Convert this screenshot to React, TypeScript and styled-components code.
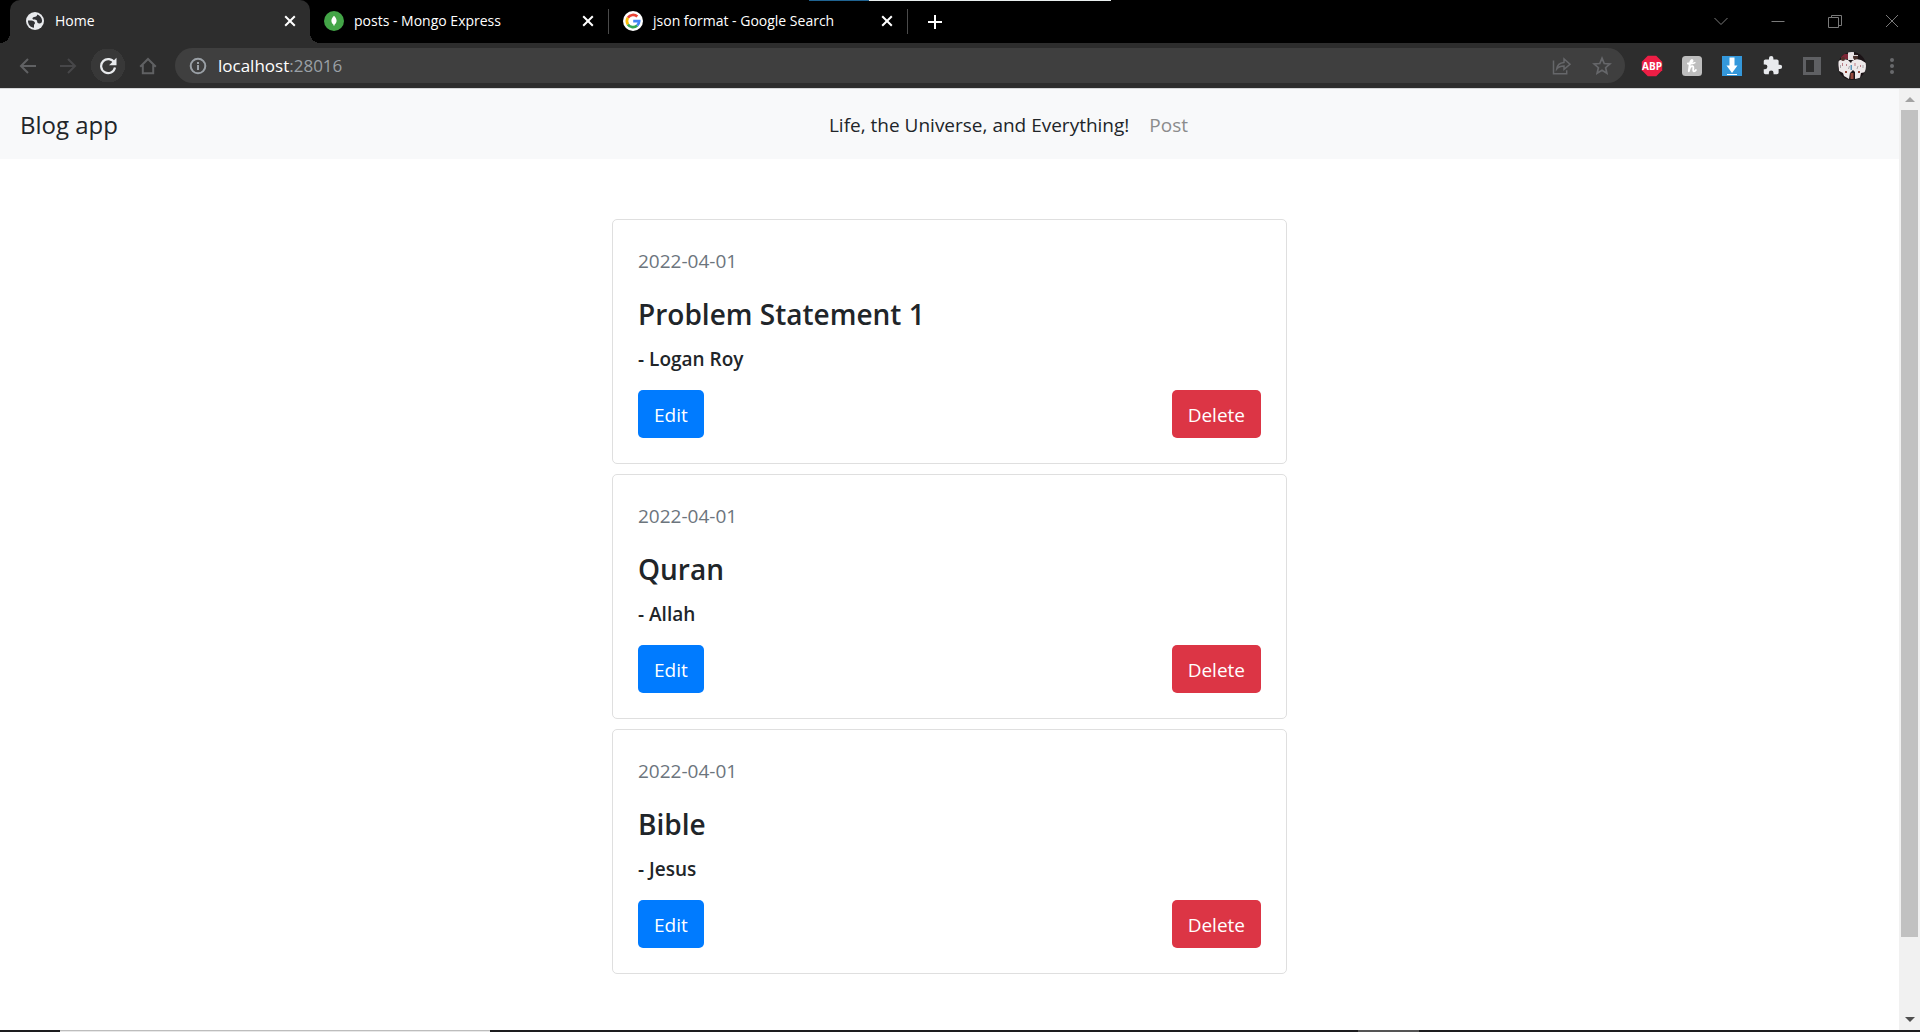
import React from "react";
import styled, { createGlobalStyle, css } from "styled-components";

const GlobalStyle = createGlobalStyle`
  *, *::before, *::after { box-sizing: border-box; }
  body {
    margin: 0;
    background: #fff;
    color: #212529;
    font-family: "Open Sans", "Noto Sans", sans-serif;
    font-size: 19px;
    line-height: 30px;
  }
  button, input { font: inherit; }
  svg { display: block; flex: none; }
`;

const BrowserWindow = styled.div`
  position: relative;
  display: flex;
  flex-direction: column;
  height: 100vh;
  overflow: hidden;
`;

const TopSliver = styled.div`
  position: absolute;
  top: 0;
  left: 42.15%;
  width: 15.7%;
  height: 1px;
  background: linear-gradient(to right, #1f6391 20%, #e9eeee 20%);
`;

const TabStrip = styled.div`
  display: flex;
  align-items: center;
  flex: none;
  height: 43px;
  padding-left: 10px;
  background: #000;
  color: #fff;
`;

const Tab = styled.div<{ $active?: boolean }>`
  position: relative;
  display: flex;
  align-items: center;
  gap: 10px;
  height: 100%;
  width: 298px;
  padding: 0 14px;
  padding-bottom: 1px;
  font-size: 14px;
  line-height: 20px;
  ${(p) =>
    p.$active &&
    css`
      width: 300px;
      padding: 0 14px 1px 15px;
      background: #2d2d2d;
      border-radius: 10px 10px 0 0;
      &::before,
      &::after {
        content: "";
        position: absolute;
        bottom: 0;
        width: 10px;
        height: 10px;
      }
      &::before {
        left: -10px;
        background: radial-gradient(circle at 0 0, #000 10px, #2d2d2d 10px);
      }
      &::after {
        right: -10px;
        background: radial-gradient(circle at 100% 0, #000 10px, #2d2d2d 10px);
      }
    `}
`;

const TabTitle = styled.span`
  flex: 1;
  white-space: nowrap;
`;

const TabSeparator = styled.div`
  width: 1px;
  height: 25px;
  background: #4a4a4a;
`;

const IconButton = styled.button<{ $width?: number; $round?: boolean }>`
  display: flex;
  align-items: center;
  justify-content: center;
  flex: none;
  width: ${(p) => p.$width ?? 40}px;
  height: 35px;
  padding: 0;
  border: 0;
  background: ${(p) =>
    p.$round ? "radial-gradient(circle, #383838 17px, transparent 17px)" : "none"};
  color: inherit;
  cursor: pointer;
`;

const WindowControls = styled.div`
  display: flex;
  margin-left: auto;
  color: #7a7a7a;
`;

const Toolbar = styled.div`
  display: flex;
  align-items: center;
  flex: none;
  height: 45px;
  padding: 0 8px;
  background: #2d2d2d;
  color: #5c5c5e;
`;

const AddressBar = styled.div`
  display: flex;
  align-items: center;
  flex: 1;
  height: 35px;
  margin: 0 7px;
  padding: 0 3px 0 14px;
  border-radius: 18px;
  background: #3f3f3f;
  color: #66676a;
  font-size: 17px;
  line-height: 24px;
`;

const HostLabel = styled.label`
  margin-left: 11px;
  color: #fff;
`;

const PortInput = styled.input`
  flex: 1;
  min-width: 0;
  padding: 0;
  border: 0;
  outline: 0;
  background: none;
  color: #9aa0a6;
`;

const Viewport = styled.div`
  display: flex;
  flex: 1;
  min-height: 0;
  border-top: 1px solid #d5d6d8;
`;

const Page = styled.div`
  flex: 1;
  min-width: 0;
  overflow: hidden;
  background: #fff;
`;

const Navbar = styled.header`
  display: flex;
  align-items: center;
  gap: 20px;
  padding: 11px 20px 9px;
  background: #f8f9fa;
`;

const Brand = styled.a`
  padding: 6px 0;
  color: #212529;
  font-size: 24px;
  line-height: 38px;
  text-decoration: none;
`;

const NavLinks = styled.nav`
  display: flex;
  flex: 1;
  justify-content: center;
`;

const NavLink = styled.a<{ $active?: boolean }>`
  padding: 10px;
  color: ${(p) => (p.$active ? "#212529" : "#8b8c8c")};
  text-decoration: none;
`;

const PostList = styled.main`
  display: flex;
  flex-direction: column;
  gap: 10px;
  max-width: 675px;
  margin: 60px auto;
`;

const Card = styled.article`
  padding: 26px 25px 25px;
  border: 1px solid #dfdfdf;
  border-radius: 5px;
`;

const PostDate = styled.p`
  margin: 0 0 20px;
  color: #6c757d;
`;

const PostTitle = styled.h2`
  margin: 0 0 15px;
  font-size: 28px;
  font-weight: 600;
  line-height: 36px;
`;

const Author = styled.h3`
  margin: 0 0 19px;
  font-size: 19px;
  font-weight: 600;
  line-height: 24px;
`;

const Actions = styled.div`
  display: flex;
  justify-content: space-between;
`;

const ActionButton = styled.button<{ $danger?: boolean }>`
  height: 48px;
  padding: 1px 16px 0;
  border: 0;
  border-radius: 5px;
  background: ${(p) => (p.$danger ? "#dc3545" : "#007bff")};
  color: #fff;
  cursor: pointer;
`;

const ScrollTrack = styled.div`
  display: flex;
  flex-direction: column;
  align-items: center;
  flex: none;
  width: 21px;
  background: #f1f1f1;
`;

const ScrollArrow = styled.div<{ $down?: boolean }>`
  display: flex;
  align-items: center;
  height: 21px;
  color: ${(p) => (p.$down ? "#505050" : "#a3a3a3")};
  transform: ${(p) => (p.$down ? "rotate(180deg)" : "none")};
`;

const ScrollThumbArea = styled.div`
  flex: 1;
  width: 17px;
`;

const ScrollThumb = styled.div`
  height: 92%;
  background: #c1c1c1;
`;

const BottomSliver = styled.div`
  display: flex;
  flex: none;
  height: 2px;
  background: #1d1d1f;
`;

const SliverPart = styled.div<{ $width: number; $tone: string }>`
  width: ${(p) => p.$width}%;
  background: ${(p) => p.$tone};
`;

const CloseGlyph = () => (
  <svg width="12" height="12" viewBox="0 0 12 12" stroke="#fff" strokeWidth="2">
    <path d="M1.2 1.2l9.6 9.6M10.8 1.2l-9.6 9.6" />
  </svg>
);

const Globe = () => (
  <svg width="20" height="20" viewBox="0 0 20 20">
    <circle cx="10" cy="10" r="9" fill="#e8eaed" />
    <path
      d="M3 9.500h3.200c2 0 3.600 1.200 3.800 2.500.1.900-1 1.200-1 2.200v2.600C5.500 16.500 2.800 13.500 3 9.500z"
      fill="#303134"
    />
    <path
      d="M12.300 3.400c2.800 1 4.700 3.400 4.800 6.400l-.4 1.700c-1.200 1-2.900 1.300-3.900.5-1-.9-.3-2.200-1.200-2.800-1.100-.7-3.300.2-4-1.100-.5-1.100.4-1.900 1.600-2.100 1.300-.2 2.700-.8 3.100-2.600z"
      fill="#303134"
    />
  </svg>
);

const MongoMark = () => (
  <svg width="20" height="20" viewBox="0 0 20 20">
    <circle cx="10" cy="10" r="10" fill="#43a547" />
    <path d="M10 4.800c1.700 1.700 2.600 3.300 2.600 5 0 1.900-1.100 3.200-2.300 4.100v1h-.6v-1c-1.200-.9-2.300-2.200-2.300-4.100 0-1.700.9-3.300 2.600-5z" fill="#fff" />
  </svg>
);

const GoogleMark = () => (
  <svg width="20" height="20" viewBox="0 0 20 20">
    <circle cx="10" cy="10" r="10" fill="#fff" />
    <g fill="none" strokeWidth="2.700">
      <path d="M4.900 6.700a6.200 6.200 0 0 1 9.400-1.100" stroke="#ea4335" />
      <path d="M4.900 13.400a6.200 6.200 0 0 1 0-6.700" stroke="#fbbc05" />
      <path d="M14.200 14.500a6.200 6.200 0 0 1-9.300-1.100" stroke="#34a853" />
      <path d="M10.200 10.200h6a6.200 6.200 0 0 1-2 4.300" stroke="#4285f4" />
    </g>
  </svg>
);

const BackIcon = ({ flip = false, color = "#606163" }: { flip?: boolean; color?: string }) => (
  <svg width="18" height="18" viewBox="0 0 18 18" fill="none" stroke={color} strokeWidth="2">
    <path d={flip ? "M1 9h15M9 2l7 7-7 7" : "M17 9H2M9 2L2 9l7 7"} />
  </svg>
);

const ReloadIcon = () => (
  <svg width="18" height="18" viewBox="0 0 18 18">
    <path d="M15.300 5.700A7 7 0 1 0 16 10.500" fill="none" stroke="#e8eaed" strokeWidth="2.200" />
    <path d="M17.500.8v7.400h-7.400z" fill="#e8eaed" />
  </svg>
);

const HomeIcon = () => (
  <svg width="18" height="18" viewBox="0 0 18 18" fill="none" stroke="#606163" strokeWidth="2">
    <path d="M1.200 9.700L9 2l7.800 7.700M3.800 8v8.200h10.400V8" />
  </svg>
);

const InfoIcon = () => (
  <svg width="18" height="18" viewBox="0 0 18 18" fill="none" stroke="#9aa0a6" strokeWidth="2">
    <circle cx="9" cy="9" r="7.300" />
    <path d="M9 8v5M9 5v2" />
  </svg>
);

const ShareIcon = () => (
  <svg width="20" height="20" viewBox="0 0 20 20" fill="none" stroke="currentColor" strokeWidth="1.500">
    <path d="M1.500 4.500v13.300h13.200v-3.600" />
    <path d="M4.700 13c.5-4.200 2.900-6.300 7.300-6.600V3l6 5.200-6 5.100V10c-3.200 0-5.500.7-7.300 3z" />
  </svg>
);

const StarIcon = () => (
  <svg width="20" height="20" viewBox="0 0 20 20" fill="none" stroke="currentColor" strokeWidth="1.700">
    <path d="M10 2.200l2.200 5.300 5.700.5-4.300 3.700 1.300 5.600-4.900-3-4.900 3 1.300-5.600L2.100 8l5.700-.5z" />
  </svg>
);

const AdBlockIcon = () => (
  <svg width="22" height="22" viewBox="0 0 22 22">
    <path d="M6.800.8h8.400l6 6v8.400l-6 6H6.800l-6-6V6.800z" fill="#ed1e45" />
    <text x="11" y="14.500" textAnchor="middle" fontSize="10" fontWeight="700" fontFamily="Open Sans, sans-serif" fill="#fff">
      ABP
    </text>
  </svg>
);

const HoneyIcon = () => (
  <svg width="22" height="22" viewBox="0 0 22 22">
    <rect x="1" y="1" width="20" height="20" rx="3.500" fill="#bdbdbd" />
    <g fill="none" stroke="#fff" strokeLinecap="round" strokeLinejoin="round">
      <path d="M7 8.500c2.500.6 4.800-1.800 4.500-3-.3-1-1.700-.3-2.200 1.600-.7 2.600-1.100 6-1.500 9.100.9-3.200 2.300-5.300 3.800-5 1.800.4-.5 5 1.300 5.200.8.100 1.500-.5 2-1.300" strokeWidth="1.900" />
      <path d="M7 8.500c2.500.5 5 .2 7-.9" strokeWidth="1.300" />
    </g>
  </svg>
);

const DownloadIcon = () => (
  <svg width="22" height="22" viewBox="0 0 22 22">
    <path d="M1 1h20v20H1z" fill="#3498db" />
    <path d="M8.500 2.500h5v8h3L11 18l-5.500-7.500h3zM6 19h10v1H6z" fill="#fff" />
  </svg>
);

const PuzzleIcon = () => (
  <svg width="21" height="21" viewBox="0 0 24 24" fill="#e8eaed">
    <path d="M20.500 11H19V7c0-1.100-.9-2-2-2h-4V3.500a2.500 2.500 0 0 0-5 0V5H4c-1.100 0-2 .9-2 2v3.800h1.500a2.700 2.700 0 0 1 0 5.400H2V20c0 1.100.9 2 2 2h3.800v-1.500a2.700 2.700 0 0 1 5.400 0V22H17c1.100 0 2-.9 2-2v-4h1.500a2.500 2.500 0 0 0 0-5z" />
  </svg>
);

const SidePanelIcon = () => (
  <svg width="18" height="18" viewBox="0 0 18 18">
    <path d="M0 0h18v18H0z" fill="#5f6063" />
    <path d="M3 3h8v12H3z" fill="#2d2d2d" />
  </svg>
);

const Avatar = () => (
  <svg width="28" height="28" viewBox="0 0 28 28">
    <clipPath id="avatar-round">
      <circle cx="14" cy="14" r="14" />
    </clipPath>
    <g clipPath="url(#avatar-round)">
      <path d="M0 0h28v28H0z" fill="#1b1316" />
      <path d="M3 2h7v5H3z" fill="#7d2637" />
      <path d="M10 0h6v8h-6z" fill="#e9e4e6" />
      <path d="M0 9l5-2 5 1 3 3 1-2 4-2 5 1 5 3v9l-5 1-1 5-5 1V20l-2-2-3 3-1 6-5-3-1-3-4-2z" fill="#eee9ea" />
      <circle cx="5" cy="7" r="2" fill="#54322b" />
      <circle cx="17.500" cy="5" r="2.500" fill="#49302b" />
      <path d="M15 3.500h5" stroke="#d8d4d6" />
      <path d="M4.500 11v3M8.500 12v2M17 11v3M22.500 13v2" stroke="#bb7d87" />
      <path d="M2.500 13v3M11.500 14l-1 3M20 14l-1 3M25 13v3" stroke="#aaa5a8" />
      <path d="M12.500 13h1.500v5h-1.500z" fill="#5b97bd" />
      <path d="M12.500 21h3v6h-3zM7 19h2v2H7zM20 19h2v2h-2z" fill="#94473b" />
    </g>
  </svg>
);

const MenuDots = () => (
  <svg width="6" height="18" viewBox="0 0 6 18" fill="#68696c">
    <circle cx="3" cy="3" r="2" />
    <circle cx="3" cy="9" r="2" />
    <circle cx="3" cy="15" r="2" />
  </svg>
);

const WindowGlyph = ({ d }: { d: string }) => (
  <svg width="14" height="14" viewBox="0 0 14 14" fill="none" stroke="currentColor">
    <path d={d} />
  </svg>
);

const PlusIcon = () => (
  <svg width="16" height="16" viewBox="0 0 16 16" stroke="#fff" strokeWidth="2">
    <path d="M8 1v14M1 8h14" />
  </svg>
);

const ArrowUp = () => (
  <svg width="10" height="5" viewBox="0 0 10 5" fill="currentColor">
    <path d="M0 5l5-5 5 5z" />
  </svg>
);

const windowControls = [
  { label: "Search tabs", d: "M.5 3L7 9.500 13.500 3" },
  { label: "Minimize", d: "M.5 6.500h13" },
  { label: "Restore", d: "M.5 2.500h10v10H.5zM3.500 2.500v-2h10v10h-3" },
  { label: "Close window", d: "M1 0l12 12M13 0L1 12" },
];

const extensions = [
  { label: "Adblock Plus", icon: <AdBlockIcon /> },
  { label: "Honey", icon: <HoneyIcon /> },
  { label: "Downloader", icon: <DownloadIcon /> },
  { label: "Extensions", icon: <PuzzleIcon /> },
  { label: "Side panel", icon: <SidePanelIcon /> },
  { label: "Profile", icon: <Avatar /> },
  { label: "Menu", icon: <MenuDots /> },
];

const posts = [
  { date: "2022-04-01", title: "Problem Statement 1", author: "Logan Roy" },
  { date: "2022-04-01", title: "Quran", author: "Allah" },
  { date: "2022-04-01", title: "Bible", author: "Jesus" },
];

const BrowserTab = ({ title, icon, active }: { title: string; icon: React.ReactNode; active?: boolean }) => (
  <Tab $active={active}>
    {icon}
    <TabTitle>{title}</TabTitle>
    <IconButton $width={12} aria-label={`Close ${title}`}>
      <CloseGlyph />
    </IconButton>
  </Tab>
);

export default function App() {
  return (
    <>
      <GlobalStyle />
      <BrowserWindow>
        <TabStrip>
          <BrowserTab title="Home" icon={<Globe />} active />
          <BrowserTab title="posts - Mongo Express" icon={<MongoMark />} />
          <TabSeparator />
          <BrowserTab title="json format - Google Search" icon={<GoogleMark />} />
          <TabSeparator />
          <IconButton $width={54} aria-label="New tab">
            <PlusIcon />
          </IconButton>
          <WindowControls>
            {windowControls.map((c) => (
              <IconButton key={c.label} $width={57} aria-label={c.label}>
                <WindowGlyph d={c.d} />
              </IconButton>
            ))}
          </WindowControls>
        </TabStrip>
        <TopSliver />
        <Toolbar>
          <IconButton aria-label="Back">
            <BackIcon />
          </IconButton>
          <IconButton aria-label="Forward">
            <BackIcon flip color="#474749" />
          </IconButton>
          <IconButton $round aria-label="Reload">
            <ReloadIcon />
          </IconButton>
          <IconButton aria-label="Home">
            <HomeIcon />
          </IconButton>
          <AddressBar>
            <InfoIcon />
            <HostLabel htmlFor="address">localhost</HostLabel>
            <PortInput id="address" type="text" defaultValue=":28016" />
            <IconButton aria-label="Share">
              <ShareIcon />
            </IconButton>
            <IconButton aria-label="Bookmark">
              <StarIcon />
            </IconButton>
          </AddressBar>
          {extensions.map((e) => (
            <IconButton key={e.label} aria-label={e.label}>
              {e.icon}
            </IconButton>
          ))}
        </Toolbar>
        <Viewport>
          <Page>
            <Navbar>
              <Brand href="#">Blog app</Brand>
              <NavLinks>
                <NavLink href="#" $active>
                  Life, the Universe, and Everything!
                </NavLink>
                <NavLink href="#post">Post</NavLink>
              </NavLinks>
            </Navbar>
            <PostList>
              {posts.map((post) => (
                <Card key={post.title}>
                  <PostDate>{post.date}</PostDate>
                  <PostTitle>{post.title}</PostTitle>
                  <Author>- {post.author}</Author>
                  <Actions>
                    <ActionButton>Edit</ActionButton>
                    <ActionButton $danger>Delete</ActionButton>
                  </Actions>
                </Card>
              ))}
            </PostList>
          </Page>
          <ScrollTrack>
            <ScrollArrow>
              <ArrowUp />
            </ScrollArrow>
            <ScrollThumbArea>
              <ScrollThumb />
            </ScrollThumbArea>
            <ScrollArrow $down>
              <ArrowUp />
            </ScrollArrow>
          </ScrollTrack>
        </Viewport>
        <BottomSliver>
          <SliverPart $width={3.125} $tone="transparent" />
          <SliverPart $width={22.4} $tone="linear-gradient(#bdbdbd 1px, #e8e8e8 1px)" />
          <SliverPart $width={45.2} $tone="transparent" />
          <SliverPart $width={3.2} $tone="#555" />
        </BottomSliver>
      </BrowserWindow>
    </>
  );
}
